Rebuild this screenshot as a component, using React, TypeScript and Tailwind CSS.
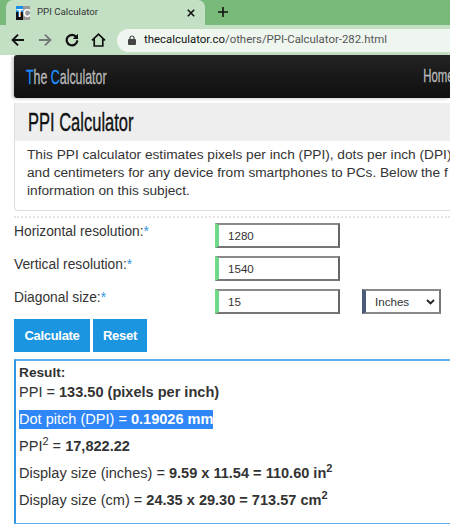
import React from "react";

const Arrow = ({ flip, color }: { flip?: boolean; color: string }) => (
  <svg width="14" height="14" viewBox="0 0 14 14" fill="none" stroke={color} strokeWidth="1.9" className={flip ? "rotate-180" : ""}>
    <path d="M13 7H2M7 1.6 1.6 7 7 12.4" />
  </svg>
);

const Field = ({ label, value, select }: { label: string; value: string; select?: boolean }) => (
  <div className="flex h-[25px] items-start">
    <div className="w-[215px] pl-[14px] text-[13.8px] leading-[17px] text-[#333]">
      {label}
      <span className="text-[#2f96e0]">*</span>
    </div>
    <div className="flex h-[25px] w-[125px] items-center border-t-2 border-b-2 border-r-2 border-t-[#8a8a8a] border-b-[#777] border-r-[#666] border-l-[4px] border-l-[#6fd987] bg-white pl-[9px] text-[11.6px] text-[#333]">
      {value}
    </div>
    {select && (
      <div className="ml-[22px] flex h-[25px] w-[79px] items-center justify-between border-t-2 border-b-2 border-r-2 border-t-[#8a8a8a] border-b-[#888] border-r-[#777] border-l-[4px] border-l-[#4a5a78] bg-white pl-[9px] pr-[4px] text-[11.6px] text-[#333]">
        Inches
        <svg width="9" height="6" viewBox="0 0 9 6" fill="none" stroke="#222" strokeWidth="1.8">
          <path d="M1 1l3.5 3.5L8 1" />
        </svg>
      </div>
    )}
  </div>
);

const Line = ({ children }: { children: React.ReactNode }) => (
  <div className="h-[27px] whitespace-nowrap text-[14.55px] leading-[18px] text-[#333]">{children}</div>
);

const Sup = ({ children, bold }: { children: React.ReactNode; bold?: boolean }) => (
  <sup className={"relative -top-[6px] align-baseline text-[11px] " + (bold ? "font-bold" : "")}>{children}</sup>
);

export default function App() {
  return (
    <div className="h-[530px] w-[450px] overflow-hidden bg-white font-['Liberation_Sans',sans-serif]">
      {/* tab strip */}
      <div className="flex h-[25px] bg-[#79ba7b]">
        <div className="ml-[6px] flex h-[25px] w-[199px] items-center rounded-t-[7px] bg-[#c3e0c4] pl-[10px] pr-[10px]">
          <div className="grid h-[14px] w-[14px] grid-cols-2 overflow-hidden text-center font-bold leading-[14px]">
            <span className="bg-gradient-to-b from-[#1b8fe6] from-40% to-[#111] to-40% text-[11px] text-white">T</span>
            <span className="bg-[#999] text-[11px] text-white">C</span>
          </div>
          <span className="ml-[7px] flex-1 font-['Roboto',sans-serif] text-[9.7px] text-[#333]">PPI Calculator</span>
          <svg width="8" height="8" viewBox="0 0 8 8" stroke="#111" strokeWidth="1.6"><path d="M.8.8l6.4 6.4M7.2.8.8 7.2" /></svg>
        </div>
        <svg className="ml-[12px] mt-[6px]" width="12" height="12" viewBox="0 0 12 12" stroke="#111" strokeWidth="1.6"><path d="M6 1v10M1 6h10" /></svg>
      </div>
      {/* toolbar */}
      <div className="flex h-[30px] items-center bg-[#c3e0c4] pl-[11px]">
        <Arrow color="#111" />
        <div className="ml-[13px]"><Arrow flip color="#777" /></div>
        <svg className="ml-[13px]" width="14" height="14" viewBox="0 0 14 14" fill="none" stroke="#111" strokeWidth="2.2"><path d="M11.3 4A5.3 5.3 0 1 0 12.3 7.4" /><path d="M13 .8v5.2H7.8z" fill="#111" stroke="none" /></svg>
        <svg className="ml-[12px]" width="15" height="14" viewBox="0 0 15 14" fill="none" stroke="#111" strokeWidth="1.7"><path d="M1 7.4 7.5 1.2 14 7.4M3.2 6v7h8.6V6" /></svg>
        <div className="ml-[11px] flex h-[23px] flex-1 items-center rounded-l-[12px] bg-[#eef6ef] pl-[11px]">
          <svg width="8" height="10" viewBox="0 0 8 10"><path d="M2 4V3a2 2 0 0 1 4 0v1" fill="none" stroke="#444" strokeWidth="1.2" /><rect y="4" width="8" height="6" rx="1" fill="#444" /></svg>
          <span className="ml-[8px] whitespace-nowrap font-['Roboto',sans-serif] text-[11.4px] text-[#555]"><span className="text-[#111]">thecalculator.co</span>/others/PPI-Calculator-282.html</span>
        </div>
      </div>
      {/* site nav */}
      <div className="ml-[14px] flex h-[43px] items-center justify-between overflow-hidden rounded-l-[3px] bg-gradient-to-b from-[#232323] to-[#0f0f0f] pl-[12px] shadow-[-2px_1px_3px_rgba(0,0,0,0.2)]">
        <div className="origin-left scale-x-[0.59] whitespace-nowrap text-[21px] text-[#bbb] [-webkit-text-stroke:0.3px_currentColor]">
          <span className="text-[#1e90ff]">T</span>he <span className="text-[#1e90ff]">C</span>alculator
        </div>
        <div className="-mr-[4px] origin-right scale-x-[0.6] text-[19px] text-[#bbb] [-webkit-text-stroke:0.3px_currentColor]">Home</div>
      </div>
      {/* intro panel */}
      <div className="ml-[14px] mt-[5px] h-[108px] overflow-hidden rounded-bl-[4px] border-b border-l border-[#ddd]">
        <div className="flex h-[38px] items-center bg-[#eeeeee] pl-[13px]">
          <span className="origin-left scale-x-[0.635] whitespace-nowrap text-[26px] text-[#111] [-webkit-text-stroke:0.4px_#111]">PPI Calculator</span>
        </div>
        <div className="w-[480px] pl-[12px] pt-[5px] text-[13.7px] leading-[18px] text-[#333]">
          <div className="whitespace-nowrap">This PPI calculator estimates pixels per inch (PPI), dots per inch (DPI)</div>
          <div className="whitespace-nowrap">and centimeters for any device from smartphones to PCs. Below the f</div>
          <div className="whitespace-nowrap">information on this subject.</div>
        </div>
      </div>
      <div className="ml-[14px] mt-[5px] border-t-2 border-dotted border-[#e4e4e4]" />
      {/* form */}
      <div className="flex flex-col gap-[8px] pt-[5px]">
        <Field label="Horizontal resolution:" value="1280" />
        <Field label="Vertical resolution:" value="1540" />
        <Field label="Diagonal size:" value="15" select />
      </div>
      <div className="ml-[14px] mt-[5px] flex gap-[3px]">
        <button className="h-[33px] w-[76px] bg-[#1b95e0] text-[13px] font-bold tracking-[-0.3px] text-white">Calculate</button>
        <button className="h-[33px] w-[54px] bg-[#1b95e0] text-[13px] font-bold tracking-[-0.3px] text-white">Reset</button>
      </div>
      {/* result */}
      <div className="ml-[14px] mt-[7px] h-[165px] border-t-2 border-b border-l-2 border-t-[#5fb0e8] border-b-[#5fb0e8] border-l-[#2f96e0] pl-[3px] pt-[3px]">
        <div className="h-[19px] text-[13.7px] font-bold leading-[18px] text-[#333]">Result:</div>
        <Line>PPI = <b>133.50 (pixels per inch)</b></Line>
        <Line><span className="inline-block bg-[#2f86f6] pb-[1px] text-white">Dot pitch (DPI) = <b>0.19026 mm</b></span></Line>
        <Line>PPI<Sup>2</Sup> = <b>17,822.22</b></Line>
        <Line>Display size (inches) = <b>9.59 x 11.54 = 110.60 in<Sup bold>2</Sup></b></Line>
        <Line>Display size (cm) = <b>24.35 x 29.30 = 713.57 cm<Sup bold>2</Sup></b></Line>
      </div>
    </div>
  );
}
